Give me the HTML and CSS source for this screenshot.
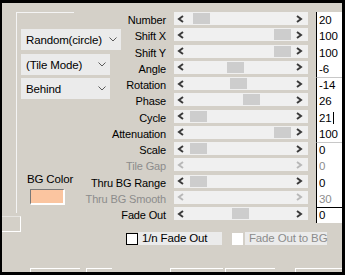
FILE: index.html
```html
<!DOCTYPE html>
<html lang="en">
<head>
  <meta charset="UTF-8">
  <meta name="viewport" content="width=device-width, initial-scale=1.0">
  <title>Tile Settings</title>
  <link rel="stylesheet" href="styles.css">
</head>
<body>

  <svg class="defs" width="0" height="0">
    <symbol id="chev-l" viewBox="0 0 8 8"><polyline points="6,1 2,4 6,7" fill="none" stroke="currentColor" stroke-width="2"/></symbol>
    <symbol id="chev-r" viewBox="0 0 8 8"><polyline points="2,1 6,4 2,7" fill="none" stroke="currentColor" stroke-width="2"/></symbol>
    <symbol id="chev-d" viewBox="0 0 8 5"><polyline points="0.5,0.5 4,4 7.5,0.5" fill="none" stroke="currentColor" stroke-width="1"/></symbol>
  </svg>

  <div class="window">
    <div class="main">

      <div class="side">
        <div class="frame">
          <div class="combo wide"><span>Random(circle)</span><svg class="drop"><use href="#chev-d"/></svg></div>
          <div class="combo"><span>(Tile Mode)</span><svg class="drop"><use href="#chev-d"/></svg></div>
          <div class="combo"><span>Behind</span><svg class="drop"><use href="#chev-d"/></svg></div>
          <div class="bg-label">BG Color</div>
          <div class="swatch"></div>
        </div>
        <div class="stub"></div>
      </div>

      <div class="labels">
        <div class="label">Number</div>
        <div class="label">Shift X</div>
        <div class="label">Shift Y</div>
        <div class="label">Angle</div>
        <div class="label">Rotation</div>
        <div class="label">Phase</div>
        <div class="label">Cycle</div>
        <div class="label">Attenuation</div>
        <div class="label">Scale</div>
        <div class="label off">Tile Gap</div>
        <div class="label">Thru BG Range</div>
        <div class="label off">Thru BG Smooth</div>
        <div class="label">Fade Out</div>
      </div>

      <div class="sliders">
        <div class="track"><svg class="arrow"><use href="#chev-l"/></svg><div class="rail"><div class="thumb" style="margin-left:8px"></div></div><svg class="arrow"><use href="#chev-r"/></svg></div>
        <div class="track"><svg class="arrow"><use href="#chev-l"/></svg><div class="rail"><div class="thumb" style="margin-left:89px"></div></div><svg class="arrow"><use href="#chev-r"/></svg></div>
        <div class="track"><svg class="arrow"><use href="#chev-l"/></svg><div class="rail"><div class="thumb" style="margin-left:89px"></div></div><svg class="arrow"><use href="#chev-r"/></svg></div>
        <div class="track"><svg class="arrow"><use href="#chev-l"/></svg><div class="rail"><div class="thumb" style="margin-left:42px"></div></div><svg class="arrow"><use href="#chev-r"/></svg></div>
        <div class="track"><svg class="arrow"><use href="#chev-l"/></svg><div class="rail"><div class="thumb" style="margin-left:45px"></div></div><svg class="arrow"><use href="#chev-r"/></svg></div>
        <div class="track"><svg class="arrow"><use href="#chev-l"/></svg><div class="rail"><div class="thumb" style="margin-left:58px"></div></div><svg class="arrow"><use href="#chev-r"/></svg></div>
        <div class="track"><svg class="arrow"><use href="#chev-l"/></svg><div class="rail"><div class="thumb" style="margin-left:5px"></div></div><svg class="arrow"><use href="#chev-r"/></svg></div>
        <div class="track"><svg class="arrow"><use href="#chev-l"/></svg><div class="rail"><div class="thumb" style="margin-left:89px"></div></div><svg class="arrow"><use href="#chev-r"/></svg></div>
        <div class="track"><svg class="arrow"><use href="#chev-l"/></svg><div class="rail"><div class="thumb" style="margin-left:5px"></div></div><svg class="arrow"><use href="#chev-r"/></svg></div>
        <div class="track off"><svg class="arrow"><use href="#chev-l"/></svg><div class="rail"></div><svg class="arrow"><use href="#chev-r"/></svg></div>
        <div class="track"><svg class="arrow"><use href="#chev-l"/></svg><div class="rail"><div class="thumb" style="margin-left:5px"></div></div><svg class="arrow"><use href="#chev-r"/></svg></div>
        <div class="track off"><svg class="arrow"><use href="#chev-l"/></svg><div class="rail"></div><svg class="arrow"><use href="#chev-r"/></svg></div>
        <div class="track"><svg class="arrow"><use href="#chev-l"/></svg><div class="rail"><div class="thumb" style="margin-left:47px"></div></div><svg class="arrow"><use href="#chev-r"/></svg></div>
      </div>

      <div class="values">
        <div class="field">20</div>
        <div class="field">100</div>
        <div class="field">100</div>
        <div class="field">-6</div>
        <div class="field split">-14</div>
        <div class="field">26</div>
        <div class="field">21<span class="caret"></span></div>
        <div class="field">100</div>
        <div class="field split">0</div>
        <div class="field off">0</div>
        <div class="field">0</div>
        <div class="field off">30</div>
        <div class="field edge">0</div>
      </div>

    </div>

    <div class="checks">
      <div class="check"><span class="box"></span><span class="text">1/n Fade Out</span></div>
      <div class="check off"><span class="box"></span><span class="text">Fade Out to BG</span></div>
    </div>

    <div class="buttons">
      <div class="btn b1"></div>
      <div class="btn b2"></div>
      <div class="btn b3"></div>
      <div class="btn b4"></div>
      <div class="btn b5"></div>
    </div>
  </div>

</body>
</html>
```

FILE: styles.css
```css
* {
  margin: 0;
  padding: 0;
  box-sizing: border-box;
}

html, body {
  width: 345px;
  height: 275px;
  overflow: hidden;
}

body {
  background-color: #000;
  font-family: "Liberation Sans", Arial, sans-serif;
  font-size: 11px;
  letter-spacing: -0.15px;
  color: #000;
}

.defs {
  position: absolute;
}

.window {
  margin: 3px 3px 0 2px;
  height: 269px;
  background-color: #d4d0c8;
  overflow: hidden;
}

.main {
  display: flex;
  height: 229px;
}

/* left column */
.side {
  width: 72px;
  flex: none;
}

.frame {
  margin: 9px 0 0 14px;
  height: 201px;
  border-top: 1px solid #f4f4f4;
  border-left: 1px solid #f4f4f4;
  padding: 16px 0 0 4px;
}

.combo {
  display: flex;
  align-items: center;
  justify-content: space-between;
  width: 89px;
  height: 21px;
  padding: 0 4px 0 5px;
  margin-bottom: 3px;
  background-color: #ebebeb;
  white-space: nowrap;
  font-size: 11.5px;
}

.combo.wide {
  width: 100px;
  margin-bottom: 4px;
}

.combo .drop {
  width: 8px;
  height: 5px;
  color: #5a5a5a;
}

.bg-label {
  margin: 73px 0 0 6px;
  line-height: 14px;
  white-space: nowrap;
  font-size: 11.5px;
}

.swatch {
  width: 35px;
  height: 16px;
  margin: 3px 0 0 9px;
  background-color: #fbc5a0;
  border-top: 1px solid #787878;
  border-left: 1px solid #787878;
  border-right: 2px solid #fff;
  border-bottom: 2px solid #fff;
}

.stub {
  width: 19px;
  height: 16px;
  margin-top: 3px;
  border-top: 1px solid #e6e4e0;
  border-right: 1px solid #fff;
  border-bottom: 1px solid #fff;
}

/* labels */
.labels {
  width: 92px;
  flex: none;
  padding-top: 9px;
  text-align: right;
}

.label {
  height: 16.25px;
  line-height: 16.25px;
  white-space: nowrap;
}

.label.off {
  color: #8c8c8c;
}

/* sliders */
.sliders {
  width: 134px;
  flex: none;
  margin-left: 8px;
  padding-top: 9px;
}

.track {
  display: flex;
  align-items: center;
  height: 13px;
  margin-bottom: 3.25px;
  padding: 0 5px 0 3px;
  background-color: #f0f0f0;
  color: #3a3a3a;
}

.track.off {
  color: #b8b8b8;
}

.arrow {
  width: 8px;
  height: 8px;
  flex: none;
}

.rail {
  flex: 1;
  height: 11px;
}

.thumb {
  width: 17px;
  height: 11px;
  background-color: #cdcdcd;
}

/* edit boxes */
.values {
  width: 28px;
  flex: none;
  margin-left: 8px;
  padding-top: 9px;
}

.field {
  height: 16.25px;
  line-height: 16.25px;
  padding-left: 2px;
  background-color: #fff;
  border-left: 1px solid #000;
  font-size: 11.5px;
}

.field.split {
  border-top: 1px solid #c8c8c8;
  line-height: 14.25px;
}

.field.edge {
  border-top: 1px solid #000;
  line-height: 14.25px;
}

.field.off {
  color: #8c8c8c;
}

.caret {
  display: inline-block;
  width: 1px;
  height: 12px;
  margin-left: 1px;
  vertical-align: -2px;
  background-color: #000;
}

/* checkboxes */
.checks {
  display: flex;
  align-items: center;
  height: 13px;
  padding-left: 124px;
}

.check {
  display: flex;
  align-items: center;
}

.check .box {
  width: 12px;
  height: 12px;
  background-color: #fff;
  border: 1px solid #000;
}

.check .text {
  width: 84px;
  height: 13px;
  line-height: 13px;
  padding-left: 4px;
  background-color: #ebebeb;
  white-space: nowrap;
  font-size: 11.5px;
}

.check.off {
  margin-left: 10px;
}

.check.off .box {
  width: 11px;
  border-color: #fff;
}

.check.off .text {
  width: 82px;
  margin-left: 2px;
  color: #8c8c8c;
}

/* buttons cut off at bottom */
.buttons {
  display: flex;
  margin-top: 23px;
}

.btn {
  height: 20px;
  border-top: 1px solid #fff;
  border-left: 1px solid #fff;
  background-color: #d4d0c8;
}

.b1 { margin-left: 28px; width: 50px; }
.b2 { margin-left: 6px; width: 26px; }
.b3 { margin-left: 58px; width: 53px; }
.b4 { margin-left: 2px; width: 50px; }
.b5 { margin-left: 20px; width: 47px; }
```
